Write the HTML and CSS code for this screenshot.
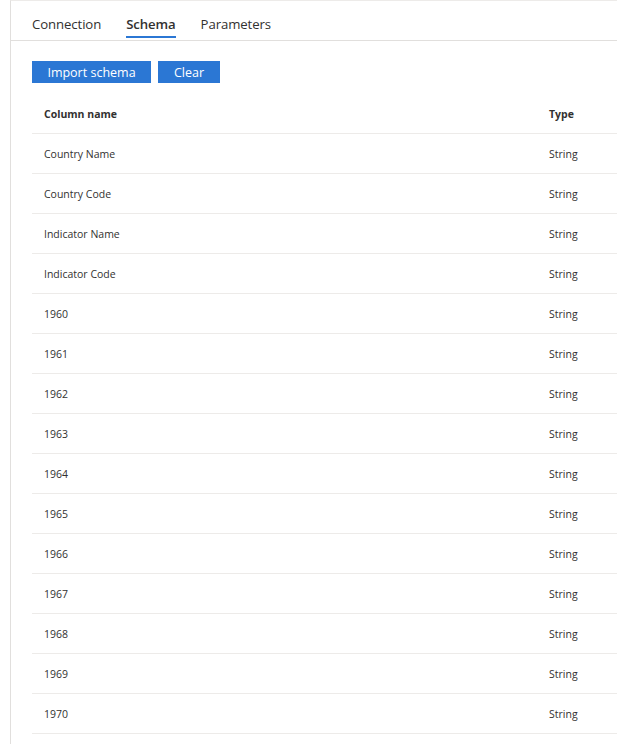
FILE: index.html
```html
<!DOCTYPE html>
<html>
<head>
<meta charset="utf-8">
<link rel="stylesheet" href="styles.css">
</head>
<body>
<div class="panel">
  <div class="tabs">
    <div class="tab">Connection</div>
    <div class="tab active">Schema</div>
    <div class="tab">Parameters</div>
  </div>
  <div class="content">
    <div class="actions">
      <button class="btn btn-import">Import schema</button>
      <button class="btn btn-clear">Clear</button>
    </div>
    <div class="table">
      <div class="row head"><div class="c1">Column name</div><div class="c2">Type</div></div>
      <div class="row"><div class="c1">Country Name</div><div class="c2">String</div></div>
      <div class="row"><div class="c1">Country Code</div><div class="c2">String</div></div>
      <div class="row"><div class="c1">Indicator Name</div><div class="c2">String</div></div>
      <div class="row"><div class="c1">Indicator Code</div><div class="c2">String</div></div>
      <div class="row"><div class="c1">1960</div><div class="c2">String</div></div>
      <div class="row"><div class="c1">1961</div><div class="c2">String</div></div>
      <div class="row"><div class="c1">1962</div><div class="c2">String</div></div>
      <div class="row"><div class="c1">1963</div><div class="c2">String</div></div>
      <div class="row"><div class="c1">1964</div><div class="c2">String</div></div>
      <div class="row"><div class="c1">1965</div><div class="c2">String</div></div>
      <div class="row"><div class="c1">1966</div><div class="c2">String</div></div>
      <div class="row"><div class="c1">1967</div><div class="c2">String</div></div>
      <div class="row"><div class="c1">1968</div><div class="c2">String</div></div>
      <div class="row"><div class="c1">1969</div><div class="c2">String</div></div>
      <div class="row"><div class="c1">1970</div><div class="c2">String</div></div>
    </div>
  </div>
</div>
</body>
</html>
```
FILE: styles.css
```css
html, body {
  margin: 0;
  padding: 0;
  background: #fff;
  overflow: hidden;
}
body {
  font-family: "Open Sans", "Noto Sans", sans-serif;
  color: #323130;
  height: 744px;
}
.panel {
  margin-left: 10px;
  border-left: 1px solid #e1dfdd;
  border-top: 1px solid #edebe9;
  height: 743px;
}
.tabs {
  display: flex;
  gap: 25px;
  padding-left: 21px;
  border-bottom: 1px solid #e1dfdd;
  height: 39px;
}
.tab {
  font-size: 13.2px;
  line-height: 20px;
  padding-top: 13px;
  height: 24px;
  color: #323130;
  letter-spacing: -0.1px;
}
.tab.active {
  font-weight: 600;
  border-bottom: 2px solid #2b77d4;
  height: 22px;
  letter-spacing: -0.1px;
}
.content {
  padding: 20px 0 0 21px;
}
.actions {
  display: flex;
  gap: 7px;
}
.btn {
  font-family: inherit;
  background: #2b77d4;
  color: #fff;
  border: 0;
  height: 22px;
  font-size: 12.5px;
  font-weight: 500;
  padding: 1px 0 0;
  margin: 0;
  line-height: 21px;
}
.btn-import { width: 119px; }
.btn-clear { width: 62px; }
.table {
  margin-top: 11px;
}
.row {
  display: flex;
  align-items: center;
  height: 39px;
  border-bottom: 1px solid #edebe9;
  font-size: 10.5px;
  padding-left: 12px;
}
.c1 { width: 505px; }
.c2 { flex: 1; }
.head { font-weight: 700; }
```
